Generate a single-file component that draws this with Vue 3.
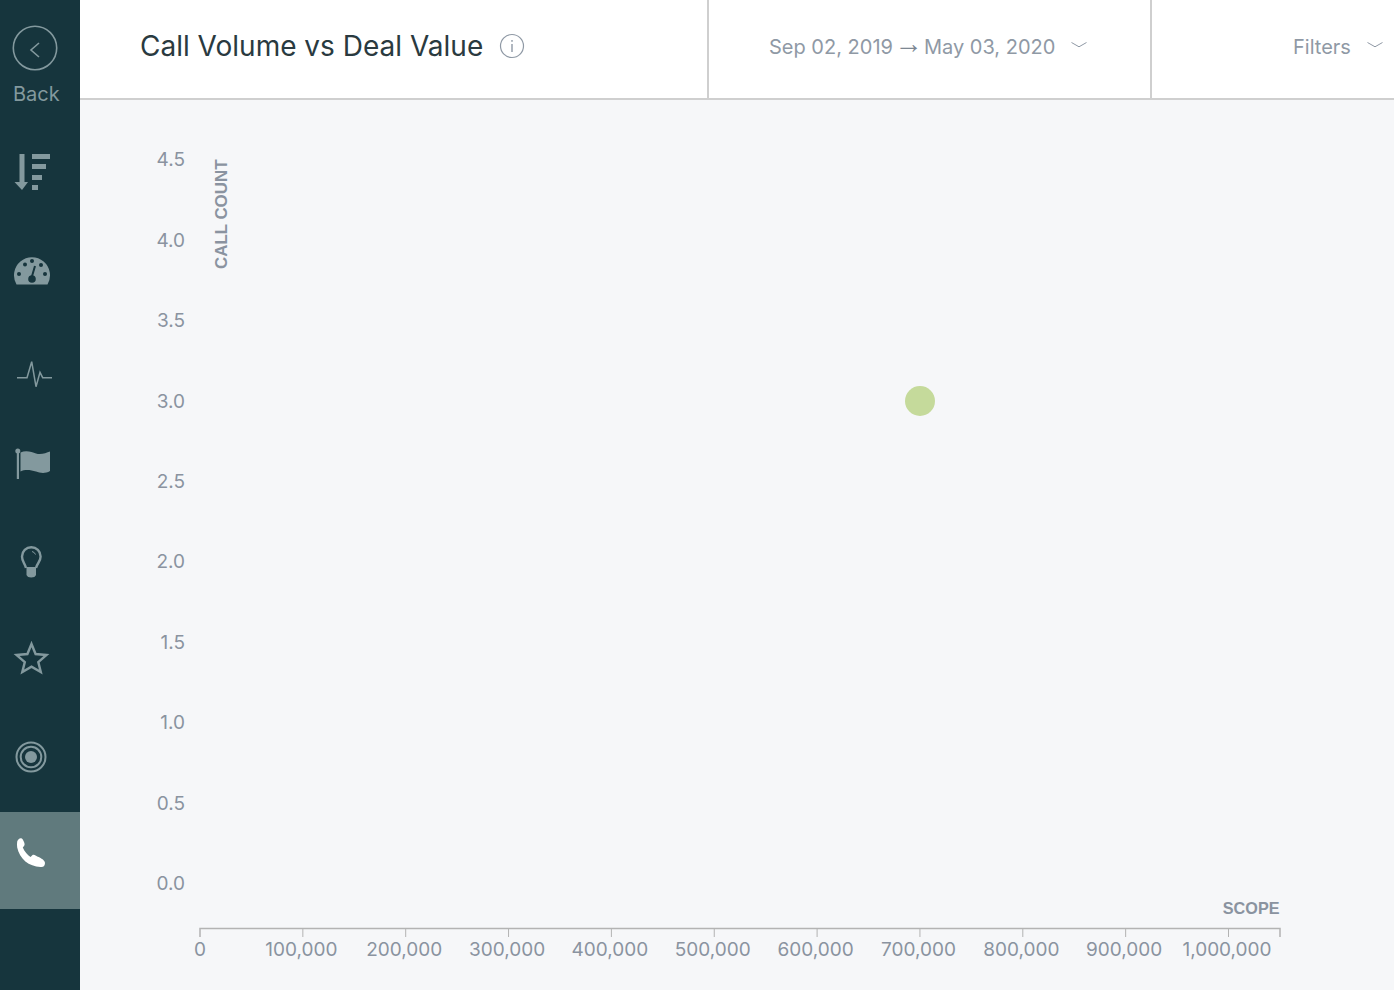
<script setup>
const yLabels = [
  { t: '4.5', y: 166 }, { t: '4.0', y: 247 }, { t: '3.5', y: 327 }, { t: '3.0', y: 408 }, { t: '2.5', y: 488 },
  { t: '2.0', y: 568 }, { t: '1.5', y: 649 }, { t: '1.0', y: 729 }, { t: '0.5', y: 810 }, { t: '0.0', y: 890 }
]
const xTicks = ['0', '100,000', '200,000', '300,000', '400,000', '500,000', '600,000', '700,000', '800,000', '900,000', '1,000,000']
  .map((t, i) => ({ t, x: 200 + i * 102.85, lx: i === 0 ? 200 : 198.5 + i * 102.85 }))
</script>

<template>
  <div class="app">
    <aside class="sidebar">
      <div class="back">
        <svg class="back-icon" width="46" height="46" viewBox="0 0 46 46">
          <circle cx="23" cy="23" r="21.7" fill="none" stroke="#83999e" stroke-width="1.6" />
          <path d="M27 18 L19 25 L27 32" fill="none" stroke="#83999e" stroke-width="1.6" />
        </svg>
        <span class="back-label">Back</span>
      </div>

      <div class="item">
        <svg width="40" height="40" viewBox="0 0 40 40" fill="#83999e">
          <path d="M7.500 1h5v28h3.500l-6 8-7.500-8h5z" />
          <rect x="20" y="1" width="18" height="5" />
          <rect x="20" y="11" width="14" height="5" />
          <rect x="20" y="22" width="10" height="5" />
          <rect x="20" y="32" width="6" height="5" />
        </svg>
      </div>

      <div class="item">
        <svg width="40" height="40" viewBox="0 0 40 40">
          <path d="M4.500 34.500 A18 18 0 1 1 35.500 34.500 Z" fill="#83999e" />
          <g fill="#16353d">
            <circle cx="7" cy="24" r="2" />
            <circle cx="13" cy="14.500" r="2" />
            <circle cx="20" cy="11" r="2" />
            <circle cx="29" cy="15" r="2" />
            <circle cx="33" cy="24" r="2" />
            <circle cx="20" cy="29" r="3.800" />
          </g>
          <path d="M19.500 28 L23 16" stroke="#16353d" stroke-width="2" />
        </svg>
      </div>

      <div class="item">
        <svg width="40" height="40" viewBox="0 0 40 40">
          <path d="M5 30.700H15L19.700 14.700L24 39.700L28 25.300L30.700 30.700H40.700" fill="none" stroke="#83999e" stroke-width="1.500" />
        </svg>
      </div>

      <div class="item">
        <svg width="40" height="40" viewBox="0 0 40 40" fill="#83999e">
          <rect x="4.800" y="7" width="2.200" height="28" />
          <circle cx="5.800" cy="7" r="2.500" />
          <path d="M8.500 8.500 C14 6, 20 8, 24 9.500 C29 11, 34 9, 38 7.500 V27 C33 30, 28 29, 24 27.500 C19 26, 13 25, 8.500 27.500 Z" />
        </svg>
      </div>

      <div class="item">
        <svg width="40" height="40" viewBox="0 0 40 40">
          <path d="M14 27 C13 22, 10 21, 10 15.500 A9.300 9.300 0 0 1 28.600 15.500 C28.600 21, 25 22, 24 27" fill="none" stroke="#83999e" stroke-width="2.400" />
          <path d="M14.500 26h9.500v8q-1 2.500-4.750 2.500t-4.750-2.500z" fill="#83999e" />
          <path d="M20 10.500 q2.500 .5 3.500 3" fill="none" stroke="#83999e" stroke-width="1" />
        </svg>
      </div>

      <div class="item">
        <svg width="40" height="40" viewBox="0 0 40 40">
          <path d="M19.500 6 L23.600 16 L34.500 17 L26.300 24.100 L28.800 34 L19.500 28.700 L10.300 34 L12.800 24.100 L4.500 17 L15.400 16 Z" fill="none" stroke="#83999e" stroke-width="2.400" stroke-linejoin="miter" />
        </svg>
      </div>

      <div class="item">
        <svg width="40" height="40" viewBox="0 0 40 40">
          <g fill="none" stroke="#83999e" stroke-width="2">
            <circle cx="19" cy="22" r="14.500" />
            <circle cx="19" cy="22" r="10.300" />
          </g>
          <circle cx="19" cy="22" r="6" fill="#83999e" />
        </svg>
      </div>

      <div class="item active">
        <svg width="40" height="40" viewBox="0 0 40 40">
          <path d="M5.200 9.500 C5.800 7.500 7.500 6 9 6.200 C10.300 6.500 11 7.500 12 10 C12.800 12 12.800 13 12 14 L10.800 15.500 C12.500 19.500 15.500 23 18.500 25 L20.300 23.300 C21.200 22.500 22.300 22.800 24 23.700 C27 25.300 33 27.500 33 31 C33 33.500 31.500 35.500 28.500 35 C17 34.500 7.500 27 5.200 15.500 C4.900 13.500 4.900 11.500 5.200 9.500 Z" fill="#fff" />
        </svg>
      </div>
    </aside>

    <main class="main">
      <header class="header">
        <div class="cell title-cell">
          <h1 class="title">Call Volume vs Deal Value</h1>
          <svg class="info" width="26" height="26" viewBox="0 0 26 26">
            <circle cx="13" cy="13" r="11.500" fill="none" stroke="#8f99a5" stroke-width="1.200" />
            <rect x="12.300" y="11" width="1.400" height="8" fill="#8f99a5" />
            <rect x="12.300" y="7" width="1.400" height="1.800" fill="#8f99a5" />
          </svg>
        </div>
        <div class="cell date-cell">
          <span class="muted"><span>Sep 02, 2019</span><span class="arrow">→</span><span>May 03, 2020</span></span>
          <svg class="chev" width="16" height="6" viewBox="0 0 16 6">
            <path d="M0.500 0.500 L8 4.800 L15.500 0.500" fill="none" stroke="#8f99a5" stroke-width="1" />
          </svg>
        </div>
        <div class="cell filter-cell">
          <span class="muted">Filters</span>
          <svg class="chev" width="16" height="6" viewBox="0 0 16 6">
            <path d="M0.500 0.500 L8 4.800 L15.500 0.500" fill="none" stroke="#8f99a5" stroke-width="1" />
          </svg>
        </div>
      </header>

      <svg class="chart" width="1314" height="890" viewBox="80 100 1314 890">
        <text v-for="l in yLabels" :key="l.t" class="tick" x="185" :y="l.y" text-anchor="end">{{ l.t }}</text>
        <text class="axis-title" transform="translate(227 269) rotate(-90)">CALL COUNT</text>
        <circle cx="920" cy="401" r="15" fill="#c5da9b" />
        <text class="axis-title scope" x="1279.500" y="914" text-anchor="end">SCOPE</text>
        <path d="M200 937V928.500H1280V937" fill="none" stroke="#b3b3b3" stroke-width="1.500" />
        <line v-for="m in xTicks.slice(1, -1).concat(xTicks[10])" :key="m.t" :x1="m.x" :x2="m.x" y1="929" y2="937" stroke="#b3b3b3" stroke-width="1" />
        <text v-for="m in xTicks" :key="'l' + m.t" class="tick" :x="m.lx" y="956" text-anchor="middle">{{ m.t }}</text>
      </svg>
    </main>
  </div>
</template>

<style>
html, body { margin: 0; overflow: hidden; }
</style>

<style scoped>
.app {
  display: flex;
  width: 1394px;
  height: 990px;
  font-family: Inter, "Liberation Sans", sans-serif;
  background: #f6f7f9;
  overflow: hidden;
}
.sidebar {
  flex: 0 0 80px;
  background: #16353d;
  display: flex;
  flex-direction: column;
}
.back {
  height: 133px;
  box-sizing: border-box;
  display: flex;
  flex-direction: column;
  align-items: flex-start;
  padding: 25px 0 0 12px;
}
.back-icon { display: block; }
.back-label {
  margin: 11px 0 0 1px;
  font-size: 20px;
  line-height: 24px;
  color: #83999e;
}
.item {
  height: 97px;
  box-sizing: border-box;
  padding: 20px 0 0 12px;
}
.item svg { display: block; }
.active { background: #607a7d; }
.main {
  flex: 1;
  display: flex;
  flex-direction: column;
  min-width: 0;
}
.header {
  display: flex;
  height: 100px;
  box-sizing: border-box;
  background: #fff;
  border-bottom: 2px solid #cfcfcf;
}
.cell {
  display: flex;
  align-items: center;
  box-sizing: border-box;
  padding-bottom: 5px;
}
.title-cell { width: 629px; padding-left: 60px; padding-bottom: 7px; border-right: 2px solid #cfcfcf; }
.date-cell { width: 443px; padding-left: 60px; border-right: 2px solid #cfcfcf; }
.filter-cell { flex: 1; padding-left: 141px; }
.title {
  margin: 0;
  font-size: 28px;
  font-weight: 400;
  color: #2a3a40;
}
.info { margin-left: 16px; }
.muted { font-size: 20px; line-height: 24px; color: #8f99a5; }
.arrow {
  font-family: "Liberation Sans", sans-serif;
  font-size: 28px;
  line-height: 0;
  margin: 0 1.500px;
  vertical-align: 1px;
  color: #7d8792;
}
.chev { margin-left: 16px; margin-bottom: 4px; }
.chart { display: block; }
.tick { font-size: 19px; fill: #8a93a0; }
.axis-title {
  font-family: "Liberation Sans", sans-serif;
  font-size: 16.900px;
  font-weight: 700;
  fill: #8a93a0;
}
.scope { font-size: 16.200px; }
</style>
